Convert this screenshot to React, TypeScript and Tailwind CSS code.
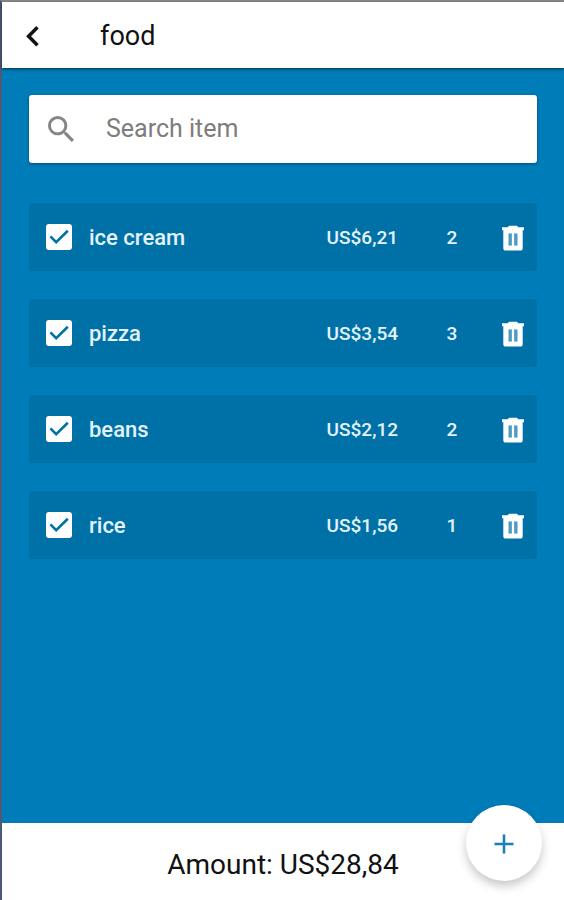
import {useState} from "react";

interface Item {
    id: number;
    name: string;
    price: number;
    quantity: number;
    checked: boolean;
}

const INITIAL_ITEMS: Item[] = [
    {id: 1, name: 'ice cream', price: 6.21, quantity: 2, checked: true},
    {id: 2, name: 'pizza', price: 3.54, quantity: 3, checked: true},
    {id: 3, name: 'beans', price: 2.12, quantity: 2, checked: true},
    {id: 4, name: 'rice', price: 1.56, quantity: 1, checked: true}
];

const formatPrice = (value: number) => `US$${value.toFixed(2).replace('.', ',')}`;

function BackIcon() {
    return <svg viewBox="0 0 14 22" className="h-[22px] w-[14px]" fill="none" stroke="currentColor" strokeWidth="3.5">
        <path d="M12.500 2.200 3.600 11.200 12.500 20.200"/>
    </svg>
}

function SearchIcon() {
    return <svg viewBox="3 3 17.5 17.5" className="size-[26px] shrink-0 text-[#858585]" fill="currentColor">
        <path
            d="M15.5 14h-.79l-.28-.27A6.471 6.471 0 0 0 16 9.5 6.5 6.5 0 1 0 9.5 16c1.61 0 3.09-.59 4.23-1.57l.27.28v.79l5 4.99L20.49 19l-4.99-5zm-6 0C7.01 14 5 11.99 5 9.5S7.01 5 9.5 5 14 7.01 14 9.5 11.99 14 9.5 14z"/>
    </svg>
}

function TrashIcon() {
    return <svg viewBox="0 0 24 26" className="h-[26px] w-[24px]" fill="currentColor">
        <path d="M8 .8h8l1.200 1.400H23v3H1v-3h5.800z"/>
        <path
            fillRule="evenodd"
            d="M2.300 4.800h19.400V23a2.600 2.600 0 0 1-2.600 2.600H4.900A2.600 2.600 0 0 1 2.300 23zM7.600 8.400v12h3.200v-12zM13.200 8.400v12h3.200v-12z"/>
        <path d="M7.600 8.400h3.200v12H7.600zM13.200 8.400h3.200v12h-3.200z" fillOpacity=".3"/>
    </svg>
}

interface ItemRowProps {
    item: Item;
    onToggle: (id: number) => void;
    onRemove: (id: number) => void;
}

function ItemRow({item, onToggle, onRemove}: ItemRowProps) {
    return <li className="flex h-[68px] items-center rounded-sm bg-[#0071a6] pr-3 pl-[17px] font-medium text-[#e4f3fb]">
        <label className="flex flex-1 items-center gap-[17px]">
            <span className="grid size-[26px] place-items-center">
                <input type="checkbox"
                       checked={item.checked}
                       onChange={() => onToggle(item.id)}
                       className="peer col-start-1 row-start-1 size-[26px] appearance-none rounded-[3px] border-2 border-white checked:bg-white"/>
                <svg viewBox="0 0 26 26"
                     className="pointer-events-none invisible col-start-1 row-start-1 size-[26px] text-[#0071a6] peer-checked:visible"
                     fill="none" stroke="currentColor" strokeWidth="2.6">
                    <path d="m4.400 12.400 5.800 5.800L21.800 6.800"/>
                </svg>
            </span>
            <span className="pt-0.5 text-[22px] leading-7">{item.name}</span>
        </label>
        <span className="pt-0.5 pr-[5px] text-[19px] leading-7">{formatPrice(item.price)}</span>
        <span className="w-[98px] pt-0.5 text-center text-[19px] leading-7">{item.quantity}</span>
        <button type="button" aria-label={`Remove ${item.name}`} className="pt-0.5 text-white"
                onClick={() => onRemove(item.id)}>
            <TrashIcon/>
        </button>
    </li>
}

export default function App() {
    const [items, setItems] = useState<Item[]>(INITIAL_ITEMS);
    const [search, setSearch] = useState('');

    const toggleItem = (id: number) => {
        setItems((prev) => prev.map((el) => el.id === id ? {...el, checked: !el.checked} : el));
    }

    const removeItem = (id: number) => {
        setItems((prev) => prev.filter((el) => el.id !== id));
    }

    const visible = items.filter((el) => el.name.includes(search.toLowerCase()));
    const amount = items.filter((el) => el.checked).reduce((acc, el) => acc + el.price * el.quantity, 0);

    return <div
        className="flex min-h-screen flex-col border-t-2 border-l-2 border-t-[#8b898c] border-l-[#4c5a78] bg-[#007cb8] font-[Roboto,sans-serif]">
        <header className="z-10 flex h-[66px] items-center bg-white pt-0.5 pl-[23px] text-[#111111] shadow-[0_1px_3px_rgba(0,0,0,0.6)]">
            <button type="button" aria-label="Back">
                <BackIcon/>
            </button>
            <h1 className="pl-[61px] text-[27px] leading-8">food</h1>
        </header>

        <main className="flex flex-1 flex-col gap-10 px-[27px] pt-[27px]">
            <label
                className="flex h-[68px] items-center gap-8 rounded-[3px] bg-white px-[19px] shadow-[0_1px_3px_rgba(0,0,0,0.4)]">
                <SearchIcon/>
                <input type="text"
                       aria-label="Search item"
                       placeholder="Search item"
                       value={search}
                       onChange={(e) => setSearch(e.target.value)}
                       className="min-w-0 flex-1 text-[25px] leading-8 text-[#222222] outline-none placeholder:text-[#7d7d7d]"/>
            </label>

            <ul className="flex flex-col gap-7">
                {visible.map((item) => (
                    <ItemRow key={item.id} item={item} onToggle={toggleItem} onRemove={removeItem}/>
                ))}
            </ul>
        </main>

        <footer className="relative flex h-[77px] items-center justify-center bg-white pt-1.5 text-[28px] leading-8 text-[#111111]">
            <p>Amount: {formatPrice(amount)}</p>
            <button type="button"
                    aria-label="Add item"
                    className="absolute -top-[18px] right-[22px] grid size-[76px] place-items-center rounded-full bg-white pt-0.5 text-[#1b7fb8] shadow-[0_5px_10px_rgba(0,0,0,0.22)]">
                <svg viewBox="0 0 20 20" className="size-5" fill="none" stroke="currentColor" strokeWidth="2.6">
                    <path d="M10 .5v19M.5 10h19"/>
                </svg>
            </button>
        </footer>
    </div>
}
